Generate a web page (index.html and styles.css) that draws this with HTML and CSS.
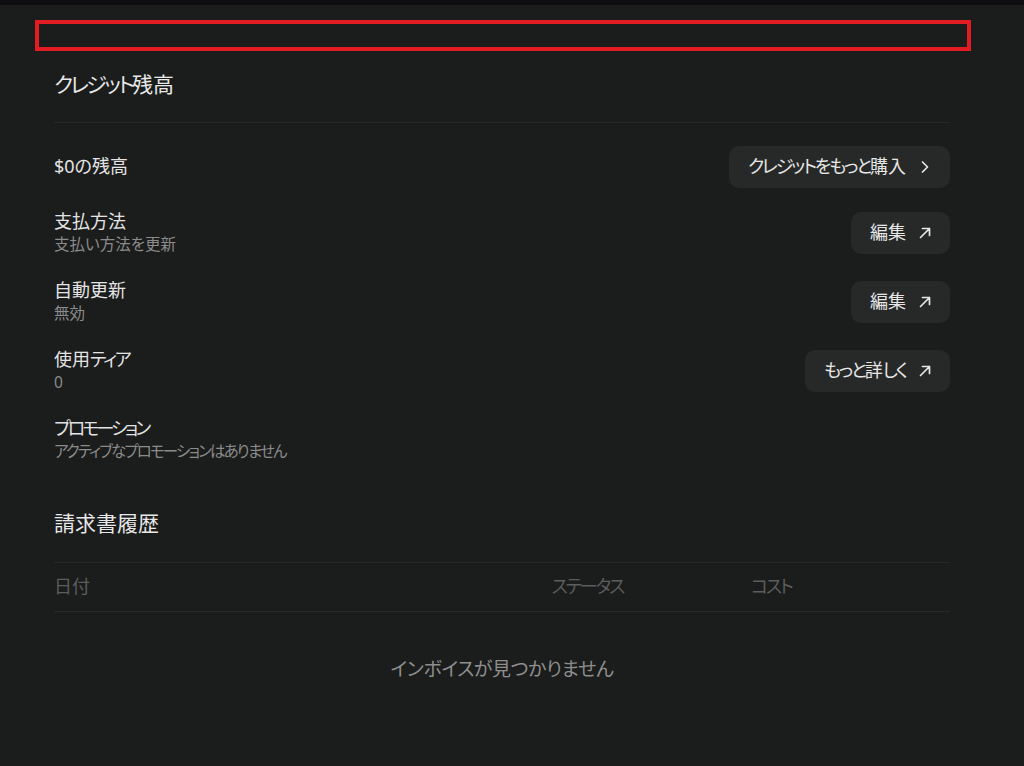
FILE: index.html
```html
<!DOCTYPE html>
<html lang="ja">
<head>
<meta charset="utf-8">
<title>クレジット残高</title>
<link rel="stylesheet" href="styles.css">
</head>
<body>
<div class="topbar"></div>
<div class="highlight"></div>
<main class="content">
  <section class="section">
    <h2 class="section-title"><span class="k">クレジット</span>残高</h2>
    <div class="divider"></div>
    <div class="rows">
      <div class="row">
        <div class="info"><div class="label">$0の残高</div></div>
        <button class="btn"><span><span class="k">クレジットをもっと</span>購入</span>
          <svg class="icon" viewBox="0 0 14 14" width="14" height="14"><path d="M4.5 2 L9.5 7 L4.5 12" fill="none" stroke="currentColor" stroke-width="1.7" stroke-linecap="round" stroke-linejoin="round"/></svg>
        </button>
      </div>
      <div class="row">
        <div class="info"><div class="label">支払方法</div><div class="sub">支払い方法を更新</div></div>
        <button class="btn"><span>編集</span>
          <svg class="icon" viewBox="0 0 14 14" width="14" height="14"><path d="M2.5 11.5 L11.5 2.5 M4.5 2.5 H11.5 V9.5" fill="none" stroke="currentColor" stroke-width="1.7" stroke-linecap="round" stroke-linejoin="round"/></svg>
        </button>
      </div>
      <div class="row">
        <div class="info"><div class="label">自動更新</div><div class="sub">無効</div></div>
        <button class="btn"><span>編集</span>
          <svg class="icon" viewBox="0 0 14 14" width="14" height="14"><path d="M2.5 11.5 L11.5 2.5 M4.5 2.5 H11.5 V9.5" fill="none" stroke="currentColor" stroke-width="1.7" stroke-linecap="round" stroke-linejoin="round"/></svg>
        </button>
      </div>
      <div class="row">
        <div class="info"><div class="label">使用<span class="k">ティア</span></div><div class="sub">0</div></div>
        <button class="btn"><span><span class="k">もっと</span>詳<span class="k">しく</span></span>
          <svg class="icon" viewBox="0 0 14 14" width="14" height="14"><path d="M2.5 11.5 L11.5 2.5 M4.5 2.5 H11.5 V9.5" fill="none" stroke="currentColor" stroke-width="1.7" stroke-linecap="round" stroke-linejoin="round"/></svg>
        </button>
      </div>
      <div class="row">
        <div class="info"><div class="label"><span class="k kk">プロモーション</span></div><div class="sub"><span class="k">アクティブなプロモーションはありません</span></div></div>
      </div>
    </div>
  </section>

  <section class="section invoices">
    <h2 class="section-title">請求書履歴</h2>
    <div class="table">
      <div class="thead">
        <div>日付</div>
        <div><span class="k">ステータス</span></div>
        <div><span class="k">コスト</span></div>
      </div>
      <div class="empty">インボイスが見つかりません</div>
    </div>
  </section>
</main>
</body>
</html>
```

FILE: styles.css
```css
* { box-sizing: border-box; }

html, body {
  margin: 0;
  padding: 0;
  background: #1b1c1c;
  height: 100%;
}

body {
  font-family: "Noto Sans", "Noto Sans CJK JP", sans-serif;
  font-feature-settings: "palt";
  color: #e4e4e4;
}

.k { letter-spacing: -0.12em; }
.kk { letter-spacing: -0.16em; }

.topbar {
  height: 5px;
  background: #0f0f13;
}

.highlight {
  margin: 15px 53px 0 35px;
  height: 31px;
  border: 4px solid #e31c24;
}

.content {
  margin: 0 74px 0 54px;
}

.section-title {
  margin: 0;
  font-size: 21px;
  font-weight: 400;
  line-height: 28px;
  color: #e8e8e8;
}

.section:first-child .section-title {
  margin-top: 19px;
  margin-bottom: 1px;
}

.divider {
  height: 1px;
  background: #272828;
  margin-top: 24px;
}

.rows {
  display: flex;
  flex-direction: column;
  gap: 21px;
  margin-top: 23px;
}

.row {
  display: flex;
  align-items: center;
  justify-content: space-between;
}

.info {
  padding-bottom: 2px;
}

.label {
  font-size: 18px;
  line-height: 24px;
  color: #e4e4e4;
}

.sub {
  font-size: 15.5px;
  line-height: 22px;
  color: #8b8b8b;
}

.btn {
  display: inline-flex;
  align-items: center;
  gap: 12px;
  height: 42px;
  padding: 0 18px 2px 19px;
  border: none;
  border-radius: 10px;
  background: #272929;
  color: #e6e6e6;
  font-family: inherit;
  font-feature-settings: "palt";
  font-size: 18px;
  line-height: 24px;
}

.icon {
  flex: none;
  display: block;
  margin-top: 2px;
}

.invoices {
  margin-top: 45px;
}

.table {
  margin-top: 25px;
}

.thead {
  display: grid;
  grid-template-columns: 5fr 2fr 2fr;
  height: 50px;
  padding-bottom: 5px;
  align-items: center;
  border-top: 1px solid #272828;
  border-bottom: 1px solid #272828;
  font-size: 18px;
  color: #5c5d5d;
}

.empty {
  text-align: center;
  padding-top: 44px;
  font-size: 19px;
  line-height: 26px;
  letter-spacing: -0.02em;
  color: #8e8e8e;
}
```
